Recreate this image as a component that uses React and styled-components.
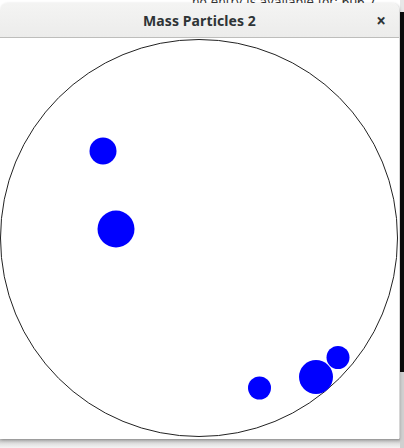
import React from 'react';
import styled, { createGlobalStyle } from 'styled-components';

const GlobalStyle = createGlobalStyle`
  html, body {
    margin: 0;
    padding: 0;
    width: 404px;
    height: 448px;
    overflow: hidden;
  }
  body {
    background: #ffffff;
    font-family: "Noto Sans", "DejaVu Sans", sans-serif;
  }
`;

const particles = [
  { x: 103, y: 113, r: 13.5 },
  { x: 116, y: 191, r: 18.5 },
  { x: 259.5, y: 350, r: 11.5 },
  { x: 316, y: 339, r: 17 },
  { x: 338, y: 319.5, r: 11.5 },
];

const Desktop = styled.div`
  position: relative;
  width: 404px;
  height: 448px;
  overflow: hidden;
  background:
    linear-gradient(to bottom, #e8e8e8 0, #e8e8e8 12px, #0b0b0b 12px, #0b0b0b 372px, #d0d0d0 372px) right top / 4px 100% no-repeat,
    linear-gradient(to bottom, #ffffff 0, #ffffff 438px, #b8b8b8 439px, #e2e2e2 444px, #f4f4f4 448px);
`;

const BackText = styled.div`
  height: 3px;
  overflow: hidden;
  padding-left: 192px;
  font-size: 12px;
  line-height: 5px;
  color: #333;
  white-space: nowrap;
  font-family: "DejaVu Sans", sans-serif;
`;

const Window = styled.div`
  width: 399px;
  display: flex;
  flex-direction: column;
  background: #ffffff;
  border-radius: 7px 7px 0 0;
  overflow: hidden;
  box-shadow: 1px 1px 3px rgba(0, 0, 0, 0.25);
`;

const TitleBar = styled.div`
  height: 34px;
  display: grid;
  grid-template-columns: 1fr auto 1fr;
  align-items: center;
  background: linear-gradient(to bottom, #f4f4f3, #ececeb);
  border-bottom: 1px solid #bdbdbb;
  padding: 0 12px;
`;

const Title = styled.div`
  grid-column: 2;
  font-size: 14px;
  font-weight: 700;
  color: #2e3436;
  letter-spacing: 0.1px;
`;

const Close = styled.div`
  grid-column: 3;
  justify-self: end;
  font-size: 17px;
  font-weight: 700;
  color: #2e3436;
  line-height: 1;
  margin-right: 1px;
`;

const Canvas = styled.svg`
  display: block;
  width: 399px;
  height: 401px;
`;

export default function App() {
  return (
    <>
      <GlobalStyle />
      <Desktop>
        <BackText>no entry is available for: 606 7</BackText>
        <Window>
          <TitleBar>
            <Title>Mass Particles 2</Title>
            <Close>×</Close>
          </TitleBar>
          <Canvas viewBox="0 0 399 401">
            <circle cx="199" cy="200" r="198.5" fill="none" stroke="#222" strokeWidth="1" />
            {particles.map((p, i) => (
              <circle key={i} cx={p.x} cy={p.y} r={p.r} fill="#0000ff" />
            ))}
          </Canvas>
        </Window>
      </Desktop>
    </>
  );
}
